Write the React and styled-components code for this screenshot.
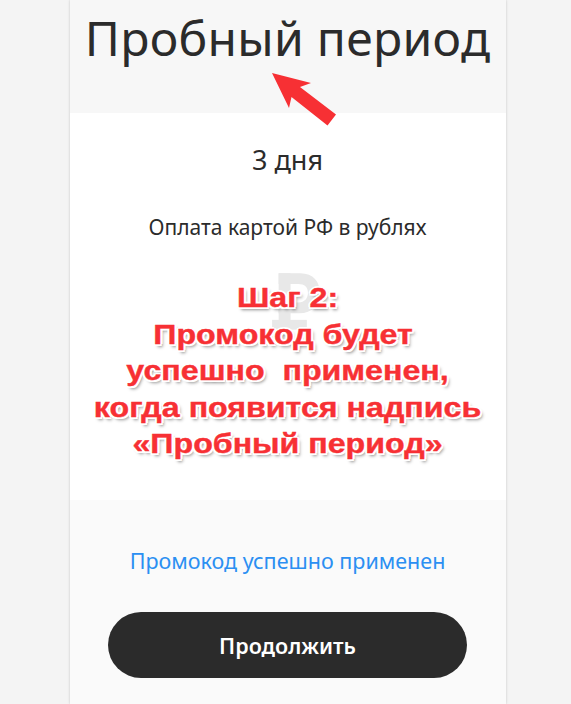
import React from "react";
import styled, { createGlobalStyle } from "styled-components";

const Global = createGlobalStyle`
  html, body { margin: 0; padding: 0; background: #f4f4f4; }
  body { font-family: "Noto Sans", "Open Sans", sans-serif; overflow: hidden; }
`;

const Page = styled.div`
  display: flex;
  justify-content: center;
  padding-left: 4px;
  height: 704px;
`;

const Card = styled.div`
  width: 436px;
  display: flex;
  flex-direction: column;
  box-shadow: 0 0 3px rgba(0, 0, 0, 0.14), 0 0 1px rgba(0, 0, 0, 0.1);
  position: relative;
`;

const Header = styled.div`
  height: 113px;
  background: #f7f7f7;
  display: flex;
  justify-content: center;
`;

const Title = styled.h1`
  margin: 0;
  font-family: "Noto Sans", sans-serif;
  font-weight: 400;
  font-size: 48px;
  line-height: 48px;
  color: #2b2b2b;
  padding-top: 14px;
  letter-spacing: 0.3px;
`;

const Arrow = styled.svg`
  position: absolute;
  left: 200px;
  top: 70px;
  width: 70px;
  height: 58px;
  z-index: 2;
`;

const Body = styled.div`
  height: 387px;
  background: #ffffff;
  display: flex;
  flex-direction: column;
  align-items: center;
  position: relative;
`;

const Days = styled.div`
  margin-top: 30px;
  font-size: 27px;
  line-height: 34px;
  color: #2b2b2b;
`;

const Pay = styled.div`
  margin-top: 37px;
  font-size: 21px;
  line-height: 26px;
  color: #2b2b2b;
`;

const Watermark = styled.svg`
  position: absolute;
  left: 202px;
  top: 158px;
  width: 48px;
  height: 76px;
`;

const Note = styled.div`
  position: relative;
  margin-top: 40px;
  font-family: "Liberation Sans", Arial, sans-serif;
  font-weight: 700;
  font-size: 27.5px;
  line-height: 36.5px;
  color: #f73034;
  text-align: center;
  white-space: pre;
  transform: scaleX(1.17);
  -webkit-text-stroke: 0.4px #f73034;
  text-shadow:
    -1.5px -1.5px 0 #fff, 1.5px -1.5px 0 #fff, -1.5px 1.5px 0 #fff, 1.5px 1.5px 0 #fff,
    0 -2px 0 #fff, 0 2px 0 #fff, -2px 0 0 #fff, 2px 0 0 #fff,
    2px 3px 3px rgba(0, 0, 0, 0.45);
`;

const Footer = styled.div`
  flex: 1;
  background: #fafafa;
  display: flex;
  flex-direction: column;
  align-items: center;
`;

const Promo = styled.div`
  margin-top: 48px;
  font-size: 21.5px;
  line-height: 26px;
  color: #2b8ff2;
`;

const Button = styled.button`
  margin-top: 38px;
  width: 359px;
  height: 66px;
  border: none;
  border-radius: 33px;
  background: #2b2b2b;
  color: #ffffff;
  font-family: "Noto Sans", sans-serif;
  font-weight: 600;
  font-size: 21.5px;
  cursor: pointer;
`;

export default function App() {
  return (
    <>
      <Global />
      <Page>
        <Card>
          <Header>
            <Title>Пробный период</Title>
          </Header>
          <Arrow viewBox="0 0 70 58">
            <polygon
              points="2,3 41,13 30,17 66,44.5 57.5,55.5 21.5,27 19,38"
              fill="#f73034"
            />
          </Arrow>
          <Body>
            <Days>3 дня</Days>
            <Pay>Оплата картой РФ в рублях</Pay>
            <Watermark viewBox="0 0 44 70">
              <g fill="#e8e8e8">
                <rect x="6" y="2" width="11" height="66" />
                <path d="M6 2 H26 C38 2 44 10 44 20 C44 31 37 39 25 39 H6 V29 H24 C30 29 33 25 33 20 C33 15 30 12 24 12 H6 Z" />
                <rect x="0" y="45" width="32" height="9" />
              </g>
            </Watermark>
            <Note>{"Шаг 2:\nПромокод будет \nуспешно  применен,\nкогда появится надпись\n«Пробный период»"}</Note>
          </Body>
          <Footer>
            <Promo>Промокод успешно применен</Promo>
            <Button>Продолжить</Button>
          </Footer>
        </Card>
      </Page>
    </>
  );
}
